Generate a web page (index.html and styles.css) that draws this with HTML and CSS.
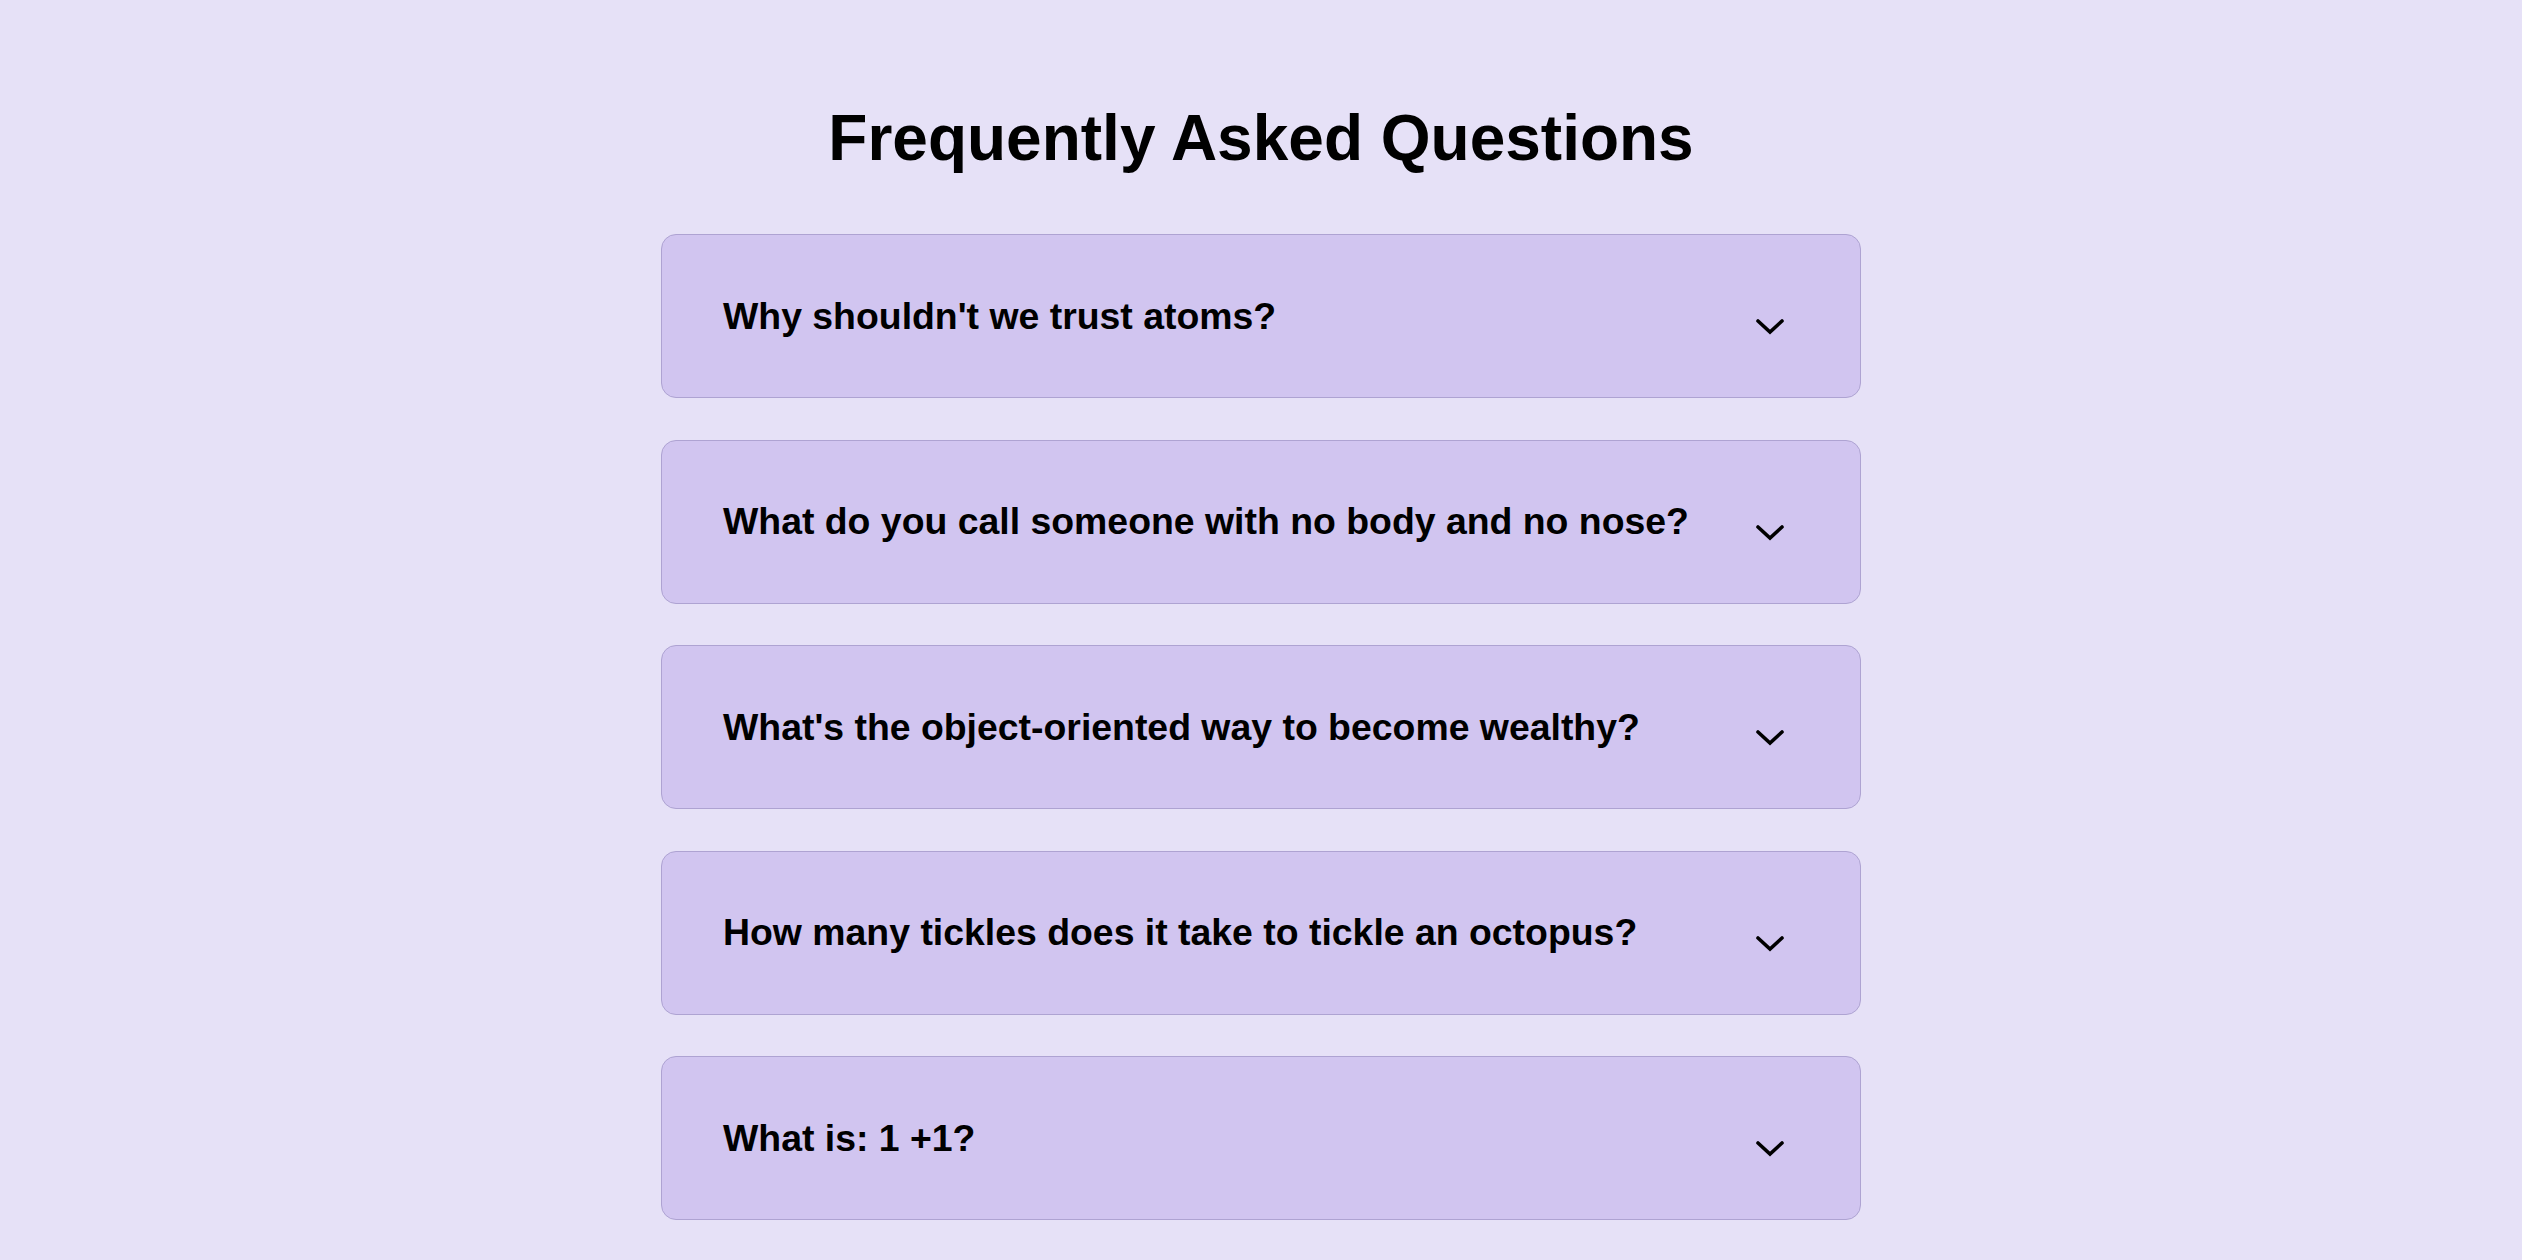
FILE: index.html
```html
<!DOCTYPE html>
<html lang="en">
<head>
    <meta charset="UTF-8">
    <title>FAQ</title>
    <link rel="stylesheet" href="styles.css">
</head>
<body>
<main class="faq">
    <h1 class="faq-title">Frequently Asked Questions</h1>

    <div class="faq-list">
        <div class="faq-item">
            <span class="faq-question">Why shouldn't we trust atoms?</span>
            <svg class="faq-chevron" viewBox="0 0 28 16"><polyline points="2,2 14,13 26,2"/></svg>
        </div>
        <div class="faq-item">
            <span class="faq-question">What do you call someone with no body and no nose?</span>
            <svg class="faq-chevron" viewBox="0 0 28 16"><polyline points="2,2 14,13 26,2"/></svg>
        </div>
        <div class="faq-item">
            <span class="faq-question">What's the object-oriented way to become wealthy?</span>
            <svg class="faq-chevron" viewBox="0 0 28 16"><polyline points="2,2 14,13 26,2"/></svg>
        </div>
        <div class="faq-item">
            <span class="faq-question">How many tickles does it take to tickle an octopus?</span>
            <svg class="faq-chevron" viewBox="0 0 28 16"><polyline points="2,2 14,13 26,2"/></svg>
        </div>
        <div class="faq-item">
            <span class="faq-question">What is: 1 +1?</span>
            <svg class="faq-chevron" viewBox="0 0 28 16"><polyline points="2,2 14,13 26,2"/></svg>
        </div>
    </div>
</main>
</body>
</html>
```

FILE: styles.css
```css
body {
    margin: 0;
    background: #e6e1f7;
    font-family: "Liberation Sans", Arial, sans-serif;
    color: #000;
}

.faq {
    width: 1200px;
    margin: 0 auto;
    padding-top: 101px;
}

.faq-title {
    margin: 0 0 59px;
    font-size: 64px;
    font-weight: bold;
    text-align: center;
}

.faq-list {
    display: flex;
    flex-direction: column;
    gap: 41.5px;
}

.faq-item {
    box-sizing: border-box;
    height: 164px;
    display: flex;
    align-items: center;
    justify-content: space-between;
    padding: 0 76px 0 61px;
    background: #d1c5f0;
    border: 1px solid #aea3d2;
    border-radius: 15px;
}

.faq-question {
    font-size: 37.4px;
    font-weight: bold;
}

/* chevron sits a little below the text line */
.faq-chevron {
    width: 28px;
    height: 16px;
    margin-top: 22px;
    fill: none;
    stroke: #000;
    stroke-width: 3.6;
    stroke-linecap: round;
    stroke-linejoin: miter;
}
```
